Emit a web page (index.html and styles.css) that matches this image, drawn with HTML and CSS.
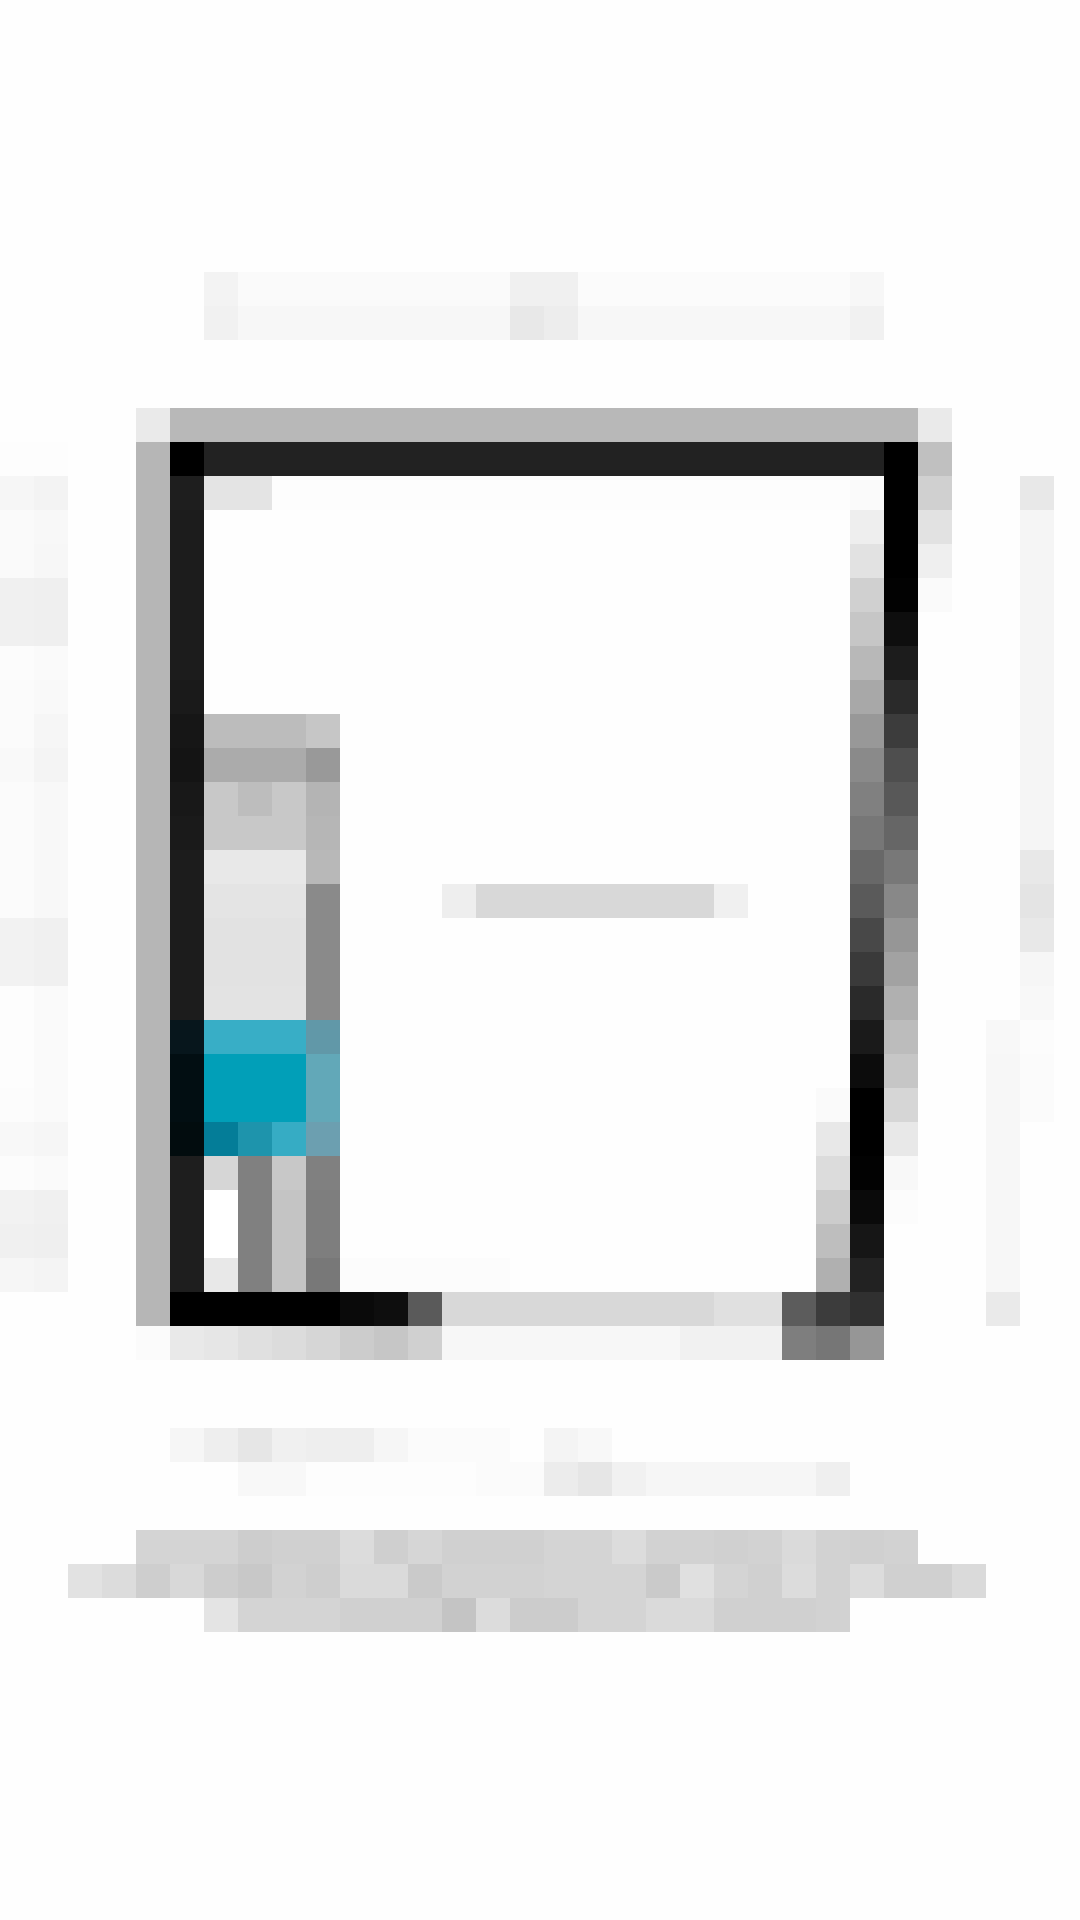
FILE: index.html
```html
<!DOCTYPE html>
<html lang="en">
<head>
<meta charset="utf-8">
<title>Mosaic</title>
<link rel="stylesheet" href="styles.css">
</head>
<body>
<main class="page">
<header class="title">
<div class="row"><i class="s6"></i><i class="gf3"></i><i class="s8 gfa"></i><i class="s2 gf0"></i><i class="s8 gfb"></i><i class="gf7"></i></div>
<div class="row"><i class="s6"></i><i class="gf1"></i><i class="s8 gf7"></i><i class="ge8"></i><i class="ged"></i><i class="s8 gf7"></i><i class="gf1"></i></div>
</header>
<section class="device">
<div class="row"><i class="s4"></i><i class="gea"></i><i class="s22 gb8"></i><i class="gea"></i></div>
<div class="row"><i class="s2 gfd"></i><i class="s2"></i><i class="gb6"></i><i class="g00"></i><i class="s20 g22"></i><i class="g00"></i><i class="gc0"></i></div>
<div class="row"><i class="gf6"></i><i class="gf3"></i><i class="s2"></i><i class="gb6"></i><i class="g1e"></i><i class="s2 ge4"></i><i class="s17 gfd"></i><i class="gfa"></i><i class="g00"></i><i class="gd0"></i><i class="s2"></i><i class="ge8"></i></div>
<div class="row"><i class="gfa"></i><i class="gf8"></i><i class="s2"></i><i class="gb6"></i><i class="g1c"></i><i class="s19"></i><i class="gee"></i><i class="g00"></i><i class="ge2"></i><i class="s2"></i><i class="gf5"></i></div>
<div class="row"><i class="gfa"></i><i class="gf7"></i><i class="s2"></i><i class="gb6"></i><i class="g1c"></i><i class="s19"></i><i class="ge2"></i><i class="g00"></i><i class="gef"></i><i class="s2"></i><i class="gf5"></i></div>
<div class="row"><i class="gf0"></i><i class="gef"></i><i class="s2"></i><i class="gb6"></i><i class="g1c"></i><i class="s19"></i><i class="gd0"></i><i class="g02"></i><i class="gfa"></i><i class="s2"></i><i class="gf5"></i></div>
<div class="row"><i class="gf0"></i><i class="gef"></i><i class="s2"></i><i class="gb6"></i><i class="g1c"></i><i class="s19"></i><i class="gc6"></i><i class="g0e"></i><i class="gfe"></i><i class="s2"></i><i class="gf5"></i></div>
<div class="row"><i class="gfc"></i><i class="gfa"></i><i class="s2"></i><i class="gb6"></i><i class="g1c"></i><i class="s19"></i><i class="gb8"></i><i class="g1c"></i><i class="s3"></i><i class="gf5"></i></div>
<div class="row"><i class="gfb"></i><i class="gf9"></i><i class="s2"></i><i class="gb6"></i><i class="g1a"></i><i class="s19"></i><i class="ga8"></i><i class="g2a"></i><i class="s3"></i><i class="gf5"></i></div>
<div class="row"><i class="gfb"></i><i class="gf6"></i><i class="s2"></i><i class="gb6"></i><i class="g16"></i><i class="s3 gbc"></i><i class="gc6"></i><i class="s15"></i><i class="g98"></i><i class="g3c"></i><i class="s3"></i><i class="gf5"></i></div>
<div class="row"><i class="gf9"></i><i class="gf4"></i><i class="s2"></i><i class="gb6"></i><i class="g14"></i><i class="s3 gab"></i><i class="g99"></i><i class="s15"></i><i class="g8a"></i><i class="g4e"></i><i class="s3"></i><i class="gf5"></i></div>
<div class="row"><i class="gfb"></i><i class="gf8"></i><i class="s2"></i><i class="gb6"></i><i class="g18"></i><i class="gc8"></i><i class="gbd"></i><i class="gc8"></i><i class="gb4"></i><i class="s15"></i><i class="g80"></i><i class="g58"></i><i class="s3"></i><i class="gf5"></i></div>
<div class="row"><i class="gfb"></i><i class="gf8"></i><i class="s2"></i><i class="gb6"></i><i class="g1a"></i><i class="s3 gc8"></i><i class="gb6"></i><i class="s15"></i><i class="g77"></i><i class="g66"></i><i class="s3"></i><i class="gf5"></i></div>
<div class="row"><i class="gfb"></i><i class="gf8"></i><i class="s2"></i><i class="gb6"></i><i class="g1c"></i><i class="s3 ge8"></i><i class="gb8"></i><i class="s15"></i><i class="g68"></i><i class="g78"></i><i class="s3"></i><i class="ge8"></i></div>
<div class="row"><i class="gfb"></i><i class="gf8"></i><i class="s2"></i><i class="gb6"></i><i class="g1c"></i><i class="s3 ge4"></i><i class="g8a"></i><i class="s3"></i><i class="gee"></i><i class="s7 gd8"></i><i class="gf0"></i><i class="s3"></i><i class="g5a"></i><i class="g88"></i><i class="s3"></i><i class="ge4"></i></div>
<div class="row"><i class="gf2"></i><i class="gf0"></i><i class="s2"></i><i class="gb6"></i><i class="g1c"></i><i class="s3 ge2"></i><i class="g8a"></i><i class="s15"></i><i class="g48"></i><i class="g96"></i><i class="s3"></i><i class="ge8"></i></div>
<div class="row"><i class="gf2"></i><i class="gf0"></i><i class="s2"></i><i class="gb6"></i><i class="g1c"></i><i class="s3 ge2"></i><i class="g8a"></i><i class="s15"></i><i class="g3a"></i><i class="ga2"></i><i class="s3"></i><i class="gf6"></i></div>
<div class="row"><i class="gfd"></i><i class="gfa"></i><i class="s2"></i><i class="gb6"></i><i class="g1c"></i><i class="s3 ge3"></i><i class="g8a"></i><i class="s15"></i><i class="g2a"></i><i class="gb0"></i><i class="s3"></i><i class="gf8"></i></div>
<div class="row"><i class="gfd"></i><i class="gfa"></i><i class="s2"></i><i class="gb6"></i><i class="teal-edge-a"></i><i class="s3 teal-light"></i><i class="teal-side-a"></i><i class="s15"></i><i class="g1a"></i><i class="gbc"></i><i class="s2"></i><i class="gf8"></i><i class="gfc"></i></div>
<div class="row"><i class="gfd"></i><i class="gfa"></i><i class="s2"></i><i class="gb6"></i><i class="teal-edge-b"></i><i class="s3 teal"></i><i class="teal-side-b"></i><i class="s15"></i><i class="g0c"></i><i class="gc6"></i><i class="s2"></i><i class="gf7"></i><i class="gfb"></i></div>
<div class="row"><i class="gfc"></i><i class="gfa"></i><i class="s2"></i><i class="gb6"></i><i class="teal-edge-b"></i><i class="s3 teal"></i><i class="teal-side-b"></i><i class="s14"></i><i class="gfa"></i><i class="g00"></i><i class="gd6"></i><i class="s2"></i><i class="gf7"></i><i class="gfb"></i></div>
<div class="row"><i class="gf8"></i><i class="gf6"></i><i class="s2"></i><i class="gb6"></i><i class="teal-edge-c"></i><i class="teal-deep"></i><i class="teal-mid"></i><i class="teal-soft"></i><i class="teal-side-c"></i><i class="s14"></i><i class="ge8"></i><i class="g00"></i><i class="ge8"></i><i class="s2"></i><i class="gf7"></i></div>
<div class="row"><i class="gfc"></i><i class="gfa"></i><i class="s2"></i><i class="gb6"></i><i class="g1e"></i><i class="gd6"></i><i class="g80"></i><i class="gc8"></i><i class="g80"></i><i class="s14"></i><i class="gdc"></i><i class="g02"></i><i class="gf8"></i><i class="s2"></i><i class="gf7"></i></div>
<div class="row"><i class="gf2"></i><i class="gf0"></i><i class="s2"></i><i class="gb6"></i><i class="g1e"></i><i class="gff"></i><i class="g80"></i><i class="gc4"></i><i class="g7e"></i><i class="s14"></i><i class="gcc"></i><i class="g0a"></i><i class="gfc"></i><i class="s2"></i><i class="gf7"></i></div>
<div class="row"><i class="gf0"></i><i class="gef"></i><i class="s2"></i><i class="gb6"></i><i class="g1e"></i><i class="gff"></i><i class="g80"></i><i class="gc4"></i><i class="g7e"></i><i class="s14"></i><i class="gbe"></i><i class="g16"></i><i class="s3"></i><i class="gf7"></i></div>
<div class="row"><i class="gf6"></i><i class="gf4"></i><i class="s2"></i><i class="gb6"></i><i class="g1e"></i><i class="ge8"></i><i class="g80"></i><i class="gc4"></i><i class="g78"></i><i class="s5 gfc"></i><i class="s9"></i><i class="gb0"></i><i class="g22"></i><i class="s3"></i><i class="gf7"></i></div>
<div class="row"><i class="s4"></i><i class="gb6"></i><i class="s5 g00"></i><i class="g0a"></i><i class="g0e"></i><i class="g5a"></i><i class="s8 gd8"></i><i class="s2 ge0"></i><i class="g5c"></i><i class="g3c"></i><i class="g30"></i><i class="s3"></i><i class="gea"></i></div>
<div class="row"><i class="s4"></i><i class="gfb"></i><i class="ge9"></i><i class="ge6"></i><i class="ge0"></i><i class="gdc"></i><i class="gd6"></i><i class="gcc"></i><i class="gc6"></i><i class="gd0"></i><i class="s7 gf7"></i><i class="s3 gf1"></i><i class="g7e"></i><i class="g76"></i><i class="g96"></i></div>
</section>
<section class="meta">
<div class="row"><i class="s5"></i><i class="gf6"></i><i class="gee"></i><i class="ge6"></i><i class="gf0"></i><i class="s2 gee"></i><i class="gf6"></i><i class="s3 gfb"></i><i></i><i class="gf4"></i><i class="gf8"></i></div>
<div class="row"><i class="s7"></i><i class="s2 gf8"></i><i class="s5 gfd"></i><i class="s2 gfb"></i><i class="gec"></i><i class="ge6"></i><i class="gf1"></i><i class="s5 gf6"></i><i class="gef"></i></div>
</section>
<footer class="caption">
<div class="row"><i class="s4"></i><i class="s3 gd4"></i><i class="gcd"></i><i class="s2 gd0"></i><i class="gdc"></i><i class="gcf"></i><i class="gd6"></i><i class="s3 gd0"></i><i class="s2 gd4"></i><i class="gdc"></i><i class="s2 gd2"></i><i class="gd0"></i><i class="gd2"></i><i class="gda"></i><i class="gd2"></i><i class="gd0"></i><i class="gd2"></i></div>
<div class="row"><i class="s2"></i><i class="ge2"></i><i class="gdc"></i><i class="gce"></i><i class="gd8"></i><i class="gcd"></i><i class="gc8"></i><i class="gd2"></i><i class="gce"></i><i class="s2 gda"></i><i class="gca"></i><i class="s3 gd2"></i><i class="s3 gd4"></i><i class="gca"></i><i class="ge0"></i><i class="gd4"></i><i class="gd0"></i><i class="gdc"></i><i class="gd2"></i><i class="gdc"></i><i class="s2 gd0"></i><i class="gda"></i></div>
<div class="row"><i class="s6"></i><i class="ge4"></i><i class="s3 gd4"></i><i class="s3 gd0"></i><i class="gc4"></i><i class="gdc"></i><i class="s2 gcc"></i><i class="s2 gd4"></i><i class="s2 gda"></i><i class="s3 gd0"></i><i class="gd2"></i></div>
</footer>
</main>
</body>
</html>
```

FILE: styles.css
```css
html, body { margin: 0; padding: 0; background: #fefefe; }
.page { width: 1080px; height: 1920px; overflow: hidden; }
.title { padding-top: 272px; }
.device { margin-top: 68px; }
.meta { margin-top: 68px; }
.caption { margin-top: 34px; }
.row { display: grid; grid-template-columns: repeat(32, 34px); grid-auto-rows: 34px; height: 34px; }
.row i { display: block; }

.s2 { grid-column: span 2; } .s3 { grid-column: span 3; } .s4 { grid-column: span 4; }
.s5 { grid-column: span 5; } .s6 { grid-column: span 6; } .s7 { grid-column: span 7; }
.s8 { grid-column: span 8; } .s9 { grid-column: span 9; } .s14 { grid-column: span 14; }
.s15 { grid-column: span 15; } .s17 { grid-column: span 17; } .s19 { grid-column: span 19; }
.s20 { grid-column: span 20; } .s22 { grid-column: span 22; }

.teal-edge-a { background: #07161c; } .teal-edge-b { background: #020e12; } .teal-edge-c { background: #020c0e; }
.teal-light { background: #38aec6; } .teal { background: #019fb8; } .teal-deep { background: #047d98; }
.teal-mid { background: #1e94ac; } .teal-soft { background: #36acc4; }
.teal-side-a { background: #6198a8; } .teal-side-b { background: #62a8b8; } .teal-side-c { background: #6c9fb0; }

.g00 { background: #000; } .g02 { background: #020202; } .g0a { background: #0a0a0a; } .g0c { background: #0c0c0c; }
.g0e { background: #0e0e0e; } .g14 { background: #141414; } .g16 { background: #161616; } .g18 { background: #181818; }
.g1a { background: #1a1a1a; } .g1c { background: #1c1c1c; } .g1e { background: #1e1e1e; } .g22 { background: #222; }
.g2a { background: #2a2a2a; } .g30 { background: #303030; } .g3a { background: #3a3a3a; } .g3c { background: #3c3c3c; }
.g48 { background: #484848; } .g4e { background: #4e4e4e; } .g58 { background: #585858; } .g5a { background: #5a5a5a; }
.g5c { background: #5c5c5c; } .g66 { background: #666; } .g68 { background: #686868; } .g76 { background: #767676; }
.g77 { background: #777; } .g78 { background: #787878; } .g7e { background: #7e7e7e; } .g80 { background: #808080; }
.g88 { background: #888; } .g8a { background: #8a8a8a; } .g96 { background: #969696; } .g98 { background: #989898; }
.g99 { background: #999; } .ga2 { background: #a2a2a2; } .ga8 { background: #a8a8a8; } .gab { background: #ababab; }
.gb0 { background: #b0b0b0; } .gb4 { background: #b4b4b4; } .gb6 { background: #b6b6b6; } .gb8 { background: #b8b8b8; }
.gbc { background: #bcbcbc; } .gbd { background: #bdbdbd; } .gbe { background: #bebebe; } .gc0 { background: #c0c0c0; }
.gc4 { background: #c4c4c4; } .gc6 { background: #c6c6c6; } .gc8 { background: #c8c8c8; } .gca { background: #cacaca; }
.gcc { background: #ccc; } .gcd { background: #cdcdcd; } .gce { background: #cecece; } .gcf { background: #cfcfcf; }
.gd0 { background: #d0d0d0; } .gd2 { background: #d2d2d2; } .gd4 { background: #d4d4d4; } .gd6 { background: #d6d6d6; }
.gd8 { background: #d8d8d8; } .gda { background: #dadada; } .gdc { background: #dcdcdc; } .ge0 { background: #e0e0e0; }
.ge2 { background: #e2e2e2; } .ge3 { background: #e3e3e3; } .ge4 { background: #e4e4e4; } .ge6 { background: #e6e6e6; }
.ge8 { background: #e8e8e8; } .ge9 { background: #e9e9e9; } .gea { background: #eaeaea; } .gec { background: #ececec; }
.ged { background: #ededed; } .gee { background: #eee; } .gef { background: #efefef; } .gf0 { background: #f0f0f0; }
.gf1 { background: #f1f1f1; } .gf2 { background: #f2f2f2; } .gf3 { background: #f3f3f3; } .gf4 { background: #f4f4f4; }
.gf5 { background: #f5f5f5; } .gf6 { background: #f6f6f6; } .gf7 { background: #f7f7f7; } .gf8 { background: #f8f8f8; }
.gf9 { background: #f9f9f9; } .gfa { background: #fafafa; } .gfb { background: #fbfbfb; } .gfc { background: #fcfcfc; }
.gfd { background: #fdfdfd; } .gfe { background: #fefefe; } .gff { background: #fff; }
```
